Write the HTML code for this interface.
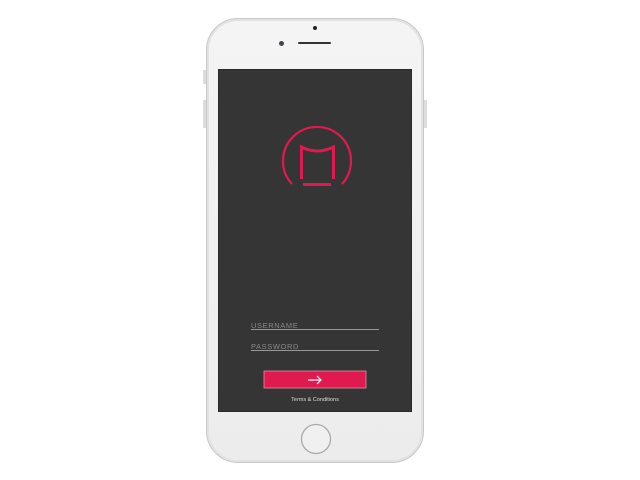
<!DOCTYPE html><html><head><style>
body{margin:0;width:640px;height:480px;background:#fff;position:relative;overflow:hidden;font-family:"Liberation Sans",sans-serif}
.ph{position:absolute;left:206px;top:18px;width:218px;height:445px;border-radius:32px;background:linear-gradient(#f4f4f4,#ececec);border:1px solid #c8c8c8;box-shadow:inset 0 0 0 2px #e2e2e2;box-sizing:border-box}
.sc{position:absolute;left:218px;top:69px;width:194px;height:343px;background:#353535;border:1px solid #2a2a2a;box-sizing:border-box}
.a{position:absolute}
</style></head><body>
<div class="ph"></div>
<div class="a" style="left:203px;top:70px;width:3px;height:14px;background:#ddd"></div>
<div class="a" style="left:203px;top:100px;width:3px;height:28px;background:#ddd"></div>
<div class="a" style="left:424px;top:100px;width:3px;height:28px;background:#ddd"></div>
<div class="a" style="left:313px;top:26px;width:4px;height:4px;border-radius:50%;background:#222"></div>
<div class="a" style="left:279px;top:41px;width:5px;height:5px;border-radius:50%;background:#445"></div>
<div class="a" style="left:298px;top:42px;width:33px;height:2px;border-radius:1px;background:#333"></div>
<div class="sc"></div>
<svg class="a" style="left:0;top:0" width="640" height="480">
<path d="M292 184 A34 34 0 1 1 342 184" fill="none" stroke="#e0194f" stroke-width="2.2"/>
<path d="M301.5 179 V147 Q317 155 333.5 147 V179" fill="none" stroke="#e0194f" stroke-width="3"/>
<rect x="303" y="183" width="28" height="3" fill="#e0194f"/>
<rect x="264" y="371" width="102" height="17" fill="#e0194f" stroke="#e98aa0" stroke-width="0.8"/>
<path d="M308 380 H321 M317 376 L321 380 L317 384" fill="none" stroke="#fff" stroke-width="1.2"/>
<circle cx="316" cy="439" r="14.5" fill="#f0f0f0" stroke="#aaa" stroke-width="1.3"/>
</svg>
<div class="a" style="left:251px;top:321px;font-size:7.5px;color:#8a8a8a;letter-spacing:0.6px">USERNAME</div>
<div class="a" style="left:251px;top:329px;width:128px;height:1px;background:#999"></div>
<div class="a" style="left:251px;top:342px;font-size:7.5px;color:#8a8a8a;letter-spacing:0.6px">PASSWORD</div>
<div class="a" style="left:251px;top:350px;width:128px;height:1px;background:#999"></div>
<div class="a" style="left:264px;top:397px;width:102px;text-align:center;font-size:5.5px;color:#ddd">Terms &amp; Conditions</div>
</body></html>
